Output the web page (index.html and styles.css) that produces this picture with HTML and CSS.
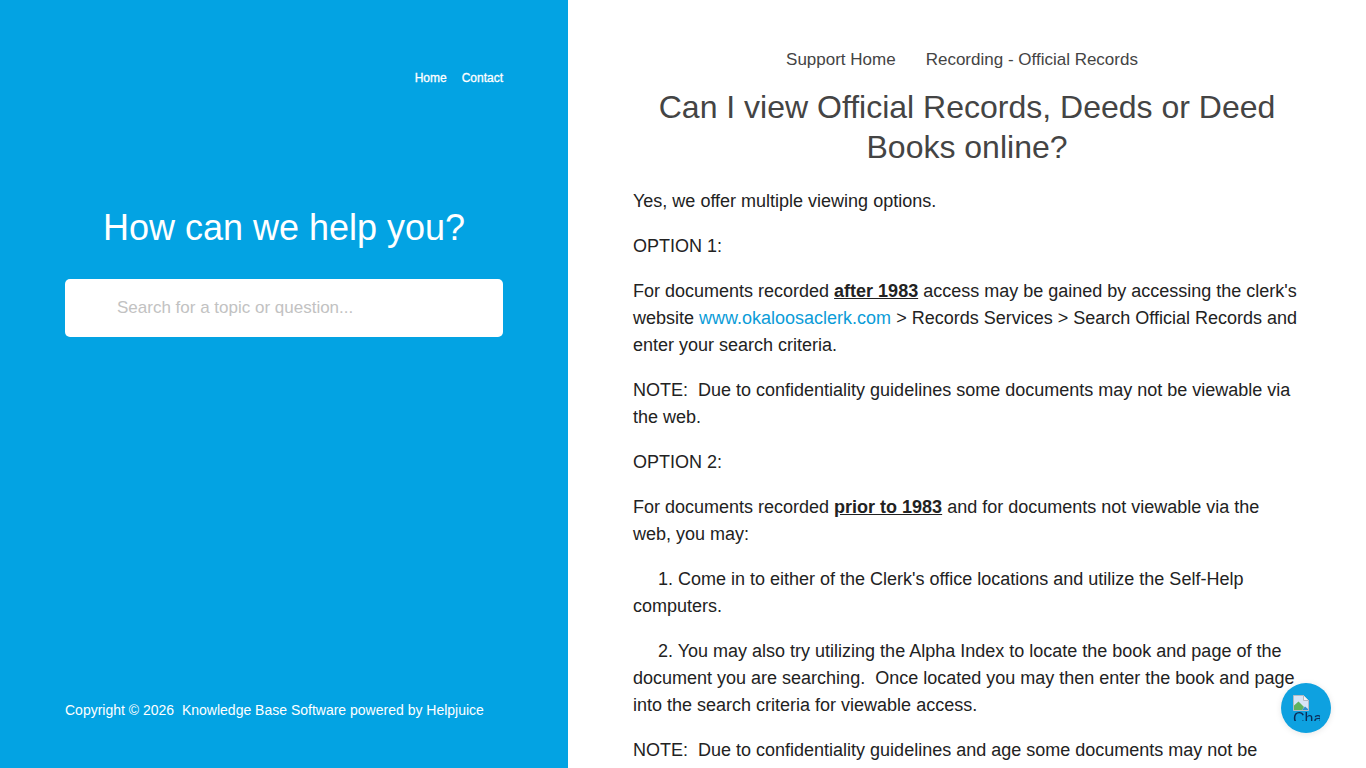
FILE: index.html
```html
<!DOCTYPE html>
<html lang="en">
  <head>
    <meta charset="UTF-8" />
    <meta name="viewport" content="width=device-width, initial-scale=1.0" />
    <title>Can I view Official Records, Deeds or Deed Books online?</title>
    <link rel="stylesheet" href="styles.css">
  </head>
  <body>
    <div class="page">
      <aside class="sidebar">
        <nav class="top-nav">
          <a href="#">Home</a>
          <a href="#">Contact</a>
        </nav>
        <div class="search-area">
          <h2>How can we help you?</h2>
          <input class="search-input" type="text" placeholder="Search for a topic or question..." />
        </div>
        <p class="copyright">Copyright &copy; 2026&nbsp; Knowledge Base Software powered by Helpjuice</p>
      </aside>

      <main class="content">
        <div class="breadcrumbs">
          <a href="#">Support Home</a>
          <a href="#">Recording - Official Records</a>
        </div>
        <h1>Can I view Official Records, Deeds or Deed Books online?</h1>
        <article>
          <p>Yes, we offer multiple viewing options.</p>
          <p>OPTION 1:</p>
          <p>For documents recorded <strong>after 1983</strong> access may be gained by accessing the clerk's website <a href="#">www.okaloosaclerk.com</a> &gt; Records Services &gt; Search Official Records and enter your search criteria.</p>
          <p>NOTE:&nbsp; Due to confidentiality guidelines some documents may not be viewable via the web.</p>
          <p>OPTION 2:</p>
          <p>For documents recorded <strong>prior to 1983</strong> and for documents not viewable via the web, you may:</p>
          <p><span class="indent"></span>1. Come in to either of the Clerk's office locations and utilize the Self-Help computers.</p>
          <p><span class="indent"></span>2. You may also try utilizing the Alpha Index to locate the book and page of the document you are searching.&nbsp; Once located you may then enter the book and page into the search criteria for viewable access.</p>
          <p>NOTE:&nbsp; Due to confidentiality guidelines and age some documents may not be viewable online.</p>
        </article>
      </main>
    </div>

    <button class="chat-button" type="button">
      <svg class="broken-image" width="16" height="16" viewBox="0 0 16 16">
        <path d="M0.5 0.5H10.5L15.5 5.5V15.5H0.5Z" fill="#d7e4f6" stroke="#b4bac2" />
        <path d="M10.5 0.5V5.5H15.5" fill="#f2f4f7" stroke="#b4bac2" />
        <path d="M1 15V10.5L5.5 6.5L11 12L9 15Z" fill="#5fb25f" />
        <path d="M9 15L12 11.5L15 14V15Z" fill="#2f8fd0" />
      </svg>
      <span class="chat-alt">Chat</span>
    </button>
  </body>
</html>
```

FILE: styles.css
```css
html {
  font-family: "Liberation Sans", Arial, sans-serif;
  overflow: hidden;
}

body {
  margin: 0;
  padding: 0;
  height: 100vh;
  overflow: hidden;
}

.page {
  display: grid;
  grid-template-columns: 568px 1fr;
  height: 768px;
}

/* left blue panel */
.sidebar {
  display: flex;
  flex-direction: column;
  background-color: #03a3e3;
  color: #fff;
  padding: 71px 65px 49px;
  box-sizing: border-box;
  height: 768px;
}

.top-nav {
  display: flex;
  justify-content: flex-end;
  gap: 15px;
  font-size: 12px;
  line-height: 15px;
}

.top-nav a {
  color: #fff;
  text-decoration: none;
  -webkit-text-stroke: 0.3px #fff;
}

.search-area {
  flex: 1;
  padding-top: 115px;
}

.search-area h2 {
  font-size: 36px;
  font-weight: normal;
  line-height: 54px;
  margin: 0 0 24px;
  text-align: center;
}

.search-input {
  display: block;
  width: 100%;
  height: 58px;
  box-sizing: border-box;
  border: 0;
  border-radius: 5px;
  padding: 0 52px;
  font-family: inherit;
  font-size: 17px;
  background-color: #fff;
}

.search-input::placeholder {
  color: #c2c2c2;
  opacity: 1;
}

.copyright {
  margin: 0;
  font-size: 14px;
  line-height: 18px;
}

/* right article column */
.content {
  padding: 48px 65px 0;
  overflow: hidden;
  height: 768px;
  box-sizing: border-box;
  color: #222;
}

.breadcrumbs {
  display: flex;
  justify-content: center;
  gap: 30px;
  font-size: 17px;
  line-height: 24px;
  padding-right: 10px;
}

.breadcrumbs a {
  color: #444;
  text-decoration: none;
}

h1 {
  font-size: 32px;
  font-weight: normal;
  line-height: 40px;
  color: #444;
  text-align: center;
  margin: 15px 0 21px;
}

article p {
  font-size: 18px;
  line-height: 27px;
  margin: 0 0 18px;
}

article strong {
  text-decoration: underline;
}

article a {
  color: #0b9cd8;
  text-decoration: none;
}

.indent {
  display: inline-block;
  width: 25px;
}

.chat-button {
  position: fixed;
  right: 35px;
  bottom: 35px;
  width: 50px;
  height: 50px;
  border: 0;
  border-radius: 50%;
  background-color: #0ea1e0;
  padding: 0;
  overflow: hidden;
  box-shadow: 0 1px 6px rgba(0, 0, 0, 0.1);
}

.broken-image {
  position: absolute;
  left: 12px;
  top: 12px;
}

.chat-alt {
  position: absolute;
  left: 12px;
  top: 28px;
  width: 27px;
  height: 10px;
  overflow: hidden;
  font-size: 16px;
  line-height: 16px;
  text-align: left;
  color: #0b2a55;
  font-family: "Liberation Sans", Arial, sans-serif;
}
```
